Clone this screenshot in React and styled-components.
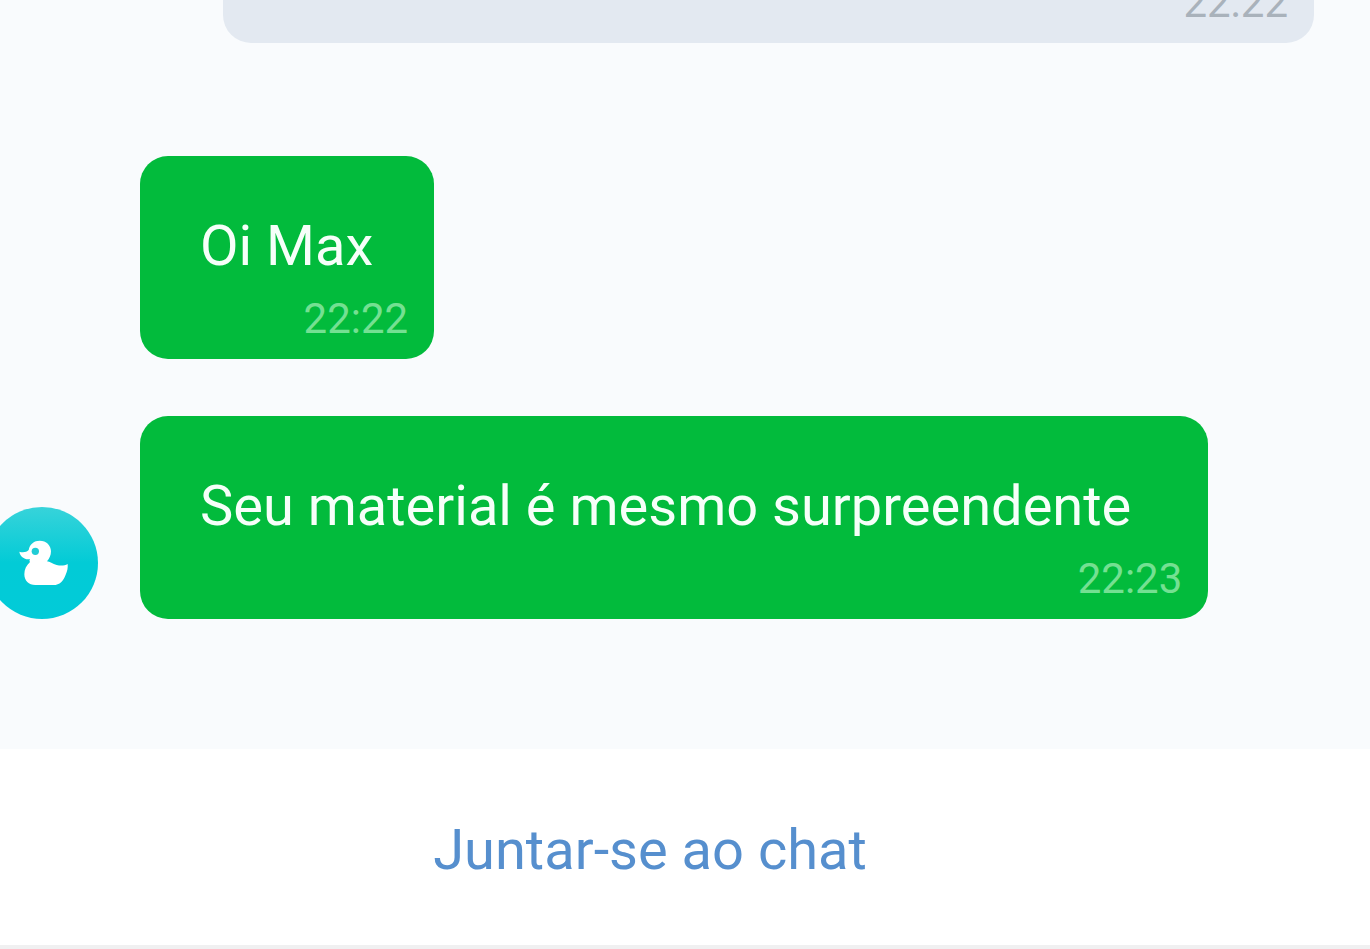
import React from 'react';
import styled, { createGlobalStyle } from 'styled-components';

const GlobalStyle = createGlobalStyle`
  *, *::before, *::after {
    box-sizing: border-box;
  }

  body {
    margin: 0;
    background: #ffffff;
    font-family: Roboto, 'Liberation Sans', sans-serif;
  }
`;

const Screen = styled.div`
  display: flex;
  flex-direction: column;
  height: 100vh;
  overflow: hidden;
`;

// Messages stick to the bottom, older ones scroll off the top
const MessageList = styled.main`
  flex: 1;
  min-height: 0;
  display: flex;
  flex-direction: column;
  justify-content: flex-end;
  gap: 113px;
  padding: 0 56px 130px 0;
  background: #f9fbfd;
  overflow: hidden;
`;

const IncomingGroup = styled.section`
  display: flex;
  align-items: flex-end;
  gap: 42px;
  margin-left: -14px;
`;

const BubbleStack = styled.div`
  flex: 1;
  display: flex;
  flex-direction: column;
  align-items: flex-start;
  gap: 57px;
`;

const Bubble = styled.article`
  display: flex;
  flex-direction: column;
  gap: 15px;
  flex-shrink: 0;
  width: ${({ $width }) => $width || 'auto'};
  padding: 57px 26px 15px 60px;
  border-radius: 28px;
  background: ${({ $outgoing }) => ($outgoing ? '#e3e9f1' : '#02bb3c')};
  color: ${({ $outgoing }) => ($outgoing ? '#a9b2bb' : '#74e092')};
  align-self: ${({ $outgoing }) => ($outgoing ? 'flex-end' : 'flex-start')};
`;

const BubbleText = styled.p`
  margin: 0 35px 0 0;
  font-size: 56px;
  line-height: 66px;
  color: #f6fff9;
`;

const Time = styled.time`
  align-self: flex-end;
  font-size: 42px;
  line-height: 50px;
`;

const AvatarIcon = styled.svg`
  flex-shrink: 0;
  width: 112px;
  height: 112px;
`;

const Footer = styled.footer`
  flex-shrink: 0;
  display: flex;
  justify-content: center;
  padding: 68px 70px 62px 0;
  border-bottom: 4px solid #f0f0f1;
  background: #ffffff;
`;

const JoinButton = styled.button`
  padding: 0;
  border: none;
  background: none;
  color: #568fce;
  font-family: inherit;
  font-size: 56px;
  line-height: 66px;
  cursor: pointer;
`;

const messages = [
  { text: 'Oi Max', time: '22:22' },
  { text: 'Seu material é mesmo surpreendente', time: '22:23', width: '91%' },
];

function DuckAvatar() {
  return (
    <AvatarIcon viewBox="-42 51 336 336" aria-hidden="true">
      <defs>
        <linearGradient id="avatar-fill" x1="0" y1="0" x2="0" y2="1">
          <stop offset="0" stopColor="#37d3da" />
          <stop offset="0.5" stopColor="#02cbd6" />
          <stop offset="1" stopColor="#02cbd8" />
        </linearGradient>
      </defs>
      <circle cx="126" cy="219" r="168" fill="url(#avatar-fill)" />
      <path
        fill="#ffffff"
        d="M58 185 C68 188 80 187 86 180 C89 162 103 152 119 152 C139 152 153 166 153 184 C153 197 148 206 141 214 C149 215 158 222 170 225 C183 228 194 227 203 222 C204 233 202 244 197 254 C190 272 180 285 160 285 L106 285 C86 285 73 272 73 253 C73 238 79 226 90 216 C88 213 88 211 90 207 C75 210 61 201 58 185 Z"
      />
      <circle cx="106" cy="184" r="11" fill="#20ccd5" />
    </AvatarIcon>
  );
}

function App() {
  return (
    <>
      <GlobalStyle />
      <Screen>
        <MessageList>
          <Bubble $outgoing $width="83%">
            <Time>22:22</Time>
          </Bubble>
          <IncomingGroup>
            <DuckAvatar />
            <BubbleStack>
              {messages.map((message) => (
                <Bubble key={message.time} $width={message.width}>
                  <BubbleText>{message.text}</BubbleText>
                  <Time>{message.time}</Time>
                </Bubble>
              ))}
            </BubbleStack>
          </IncomingGroup>
        </MessageList>
        <Footer>
          <JoinButton type="button">Juntar-se ao chat</JoinButton>
        </Footer>
      </Screen>
    </>
  );
}

export default App;
